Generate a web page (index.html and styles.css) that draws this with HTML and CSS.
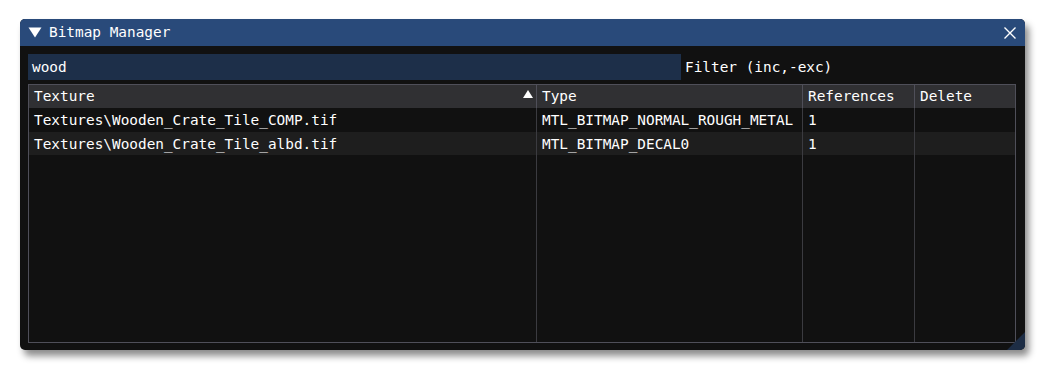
FILE: index.html
```html
<!DOCTYPE html>
<html lang="en">
  <head>
    <meta charset="UTF-8" />
    <meta name="viewport" content="width=device-width, initial-scale=1.0" />
    <title>Bitmap Manager</title>
    <link rel="stylesheet" href="styles.css">
  </head>
  <body>
    <div class="window">
      <div class="title-bar">
        <svg class="collapse" width="14" height="11" viewBox="0 0 14 11">
          <path d="M0.5 0.5 L13.5 0.5 L7 10.5 Z" fill="#ffffff" />
        </svg>
        <span class="title">Bitmap Manager</span>
        <svg class="close" width="14" height="14" viewBox="0 0 14 14">
          <path d="M1.5 1.5 L12.5 12.5 M12.5 1.5 L1.5 12.5" stroke="#ffffff" stroke-width="1.4" fill="none" />
        </svg>
      </div>

      <div class="content">
        <div class="filter-row">
          <div class="filter-input">wood</div>
          <span class="filter-label">Filter (inc,-exc)</span>
        </div>

        <div class="table">
          <div class="row header">
            <div class="cell col-texture">Texture<span class="sort-arrow"></span></div>
            <div class="cell col-type">Type</div>
            <div class="cell col-refs">References</div>
            <div class="cell col-delete">Delete</div>
          </div>
          <div class="row">
            <div class="cell col-texture">Textures\Wooden_Crate_Tile_COMP.tif</div>
            <div class="cell col-type">MTL_BITMAP_NORMAL_ROUGH_METAL</div>
            <div class="cell col-refs">1</div>
            <div class="cell col-delete"></div>
          </div>
          <div class="row alt">
            <div class="cell col-texture">Textures\Wooden_Crate_Tile_albd.tif</div>
            <div class="cell col-type">MTL_BITMAP_DECAL0</div>
            <div class="cell col-refs">1</div>
            <div class="cell col-delete"></div>
          </div>
          <div class="row filler">
            <div class="cell col-texture"></div>
            <div class="cell col-type"></div>
            <div class="cell col-refs"></div>
            <div class="cell col-delete"></div>
          </div>
        </div>
      </div>

      <div class="resize-grip"></div>
    </div>
  </body>
</html>
```

FILE: styles.css
```css
body {
  margin: 0;
  padding: 19px 20px;
  background-color: #ffffff;
  font-family: "DejaVu Sans Mono", "Liberation Mono", monospace;
  font-size: 14.4px;
  color: #ffffff;
}

.window {
  position: relative;
  width: 1005px;
  height: 331px;
  background-color: #111111;
  border-radius: 5px;
  box-shadow: 4px 6px 7px rgba(0, 0, 0, 0.45);
  overflow: hidden;
  display: flex;
  flex-direction: column;
}

.title-bar {
  height: 27px;
  background-color: #294a7a;
  display: flex;
  align-items: center;
  padding: 0 8px 0 8px;
}

.collapse {
  display: block;
  margin-right: 7px;
}

.title {
  flex: 1;
  line-height: 1;
}

.close {
  display: block;
  margin-top: 1px;
}

.content {
  flex: 1;
  display: flex;
  flex-direction: column;
  padding: 8px 8px 7px 8px;
  gap: 4px;
}

.filter-row {
  display: flex;
  align-items: center;
  gap: 4px;
}

.filter-input {
  width: 649px;
  height: 26px;
  line-height: 26px;
  padding-left: 4px;
  background-color: #1d2f49;
}

.filter-label {
  line-height: 26px;
}

.table {
  flex: 1;
  display: flex;
  flex-direction: column;
  border: 1px solid #4f4f59;
  width: 986px;
}

.row {
  display: flex;
  height: 24px;
}

.row.alt {
  height: 23px;
  background-color: #1e1e1e;
}

.row.header {
  height: 23px;
  background-color: #303033;
}

.row.filler {
  flex: 1;
}

.cell {
  box-sizing: border-box;
  padding-left: 5px;
  line-height: 24px;
  white-space: nowrap;
  overflow: hidden;
  border-right: 1px solid #3b3b40;
}

.header .cell {
  line-height: 23px;
  border-right-color: #4f4f59;
}

.col-texture {
  width: 508px;
  position: relative;
}

.col-type {
  width: 266px;
}

.col-refs {
  width: 112px;
}

.col-delete {
  width: 100px;
  border-right: none;
}

.sort-arrow {
  position: absolute;
  right: 3px;
  top: 5px;
  width: 0;
  height: 0;
  border-left: 5px solid transparent;
  border-right: 5px solid transparent;
  border-bottom: 8px solid #ffffff;
}

.resize-grip {
  position: absolute;
  right: 0;
  bottom: 0;
  width: 0;
  height: 0;
  border-left: 18px solid transparent;
  border-bottom: 18px solid #1d2d45;
}
```
